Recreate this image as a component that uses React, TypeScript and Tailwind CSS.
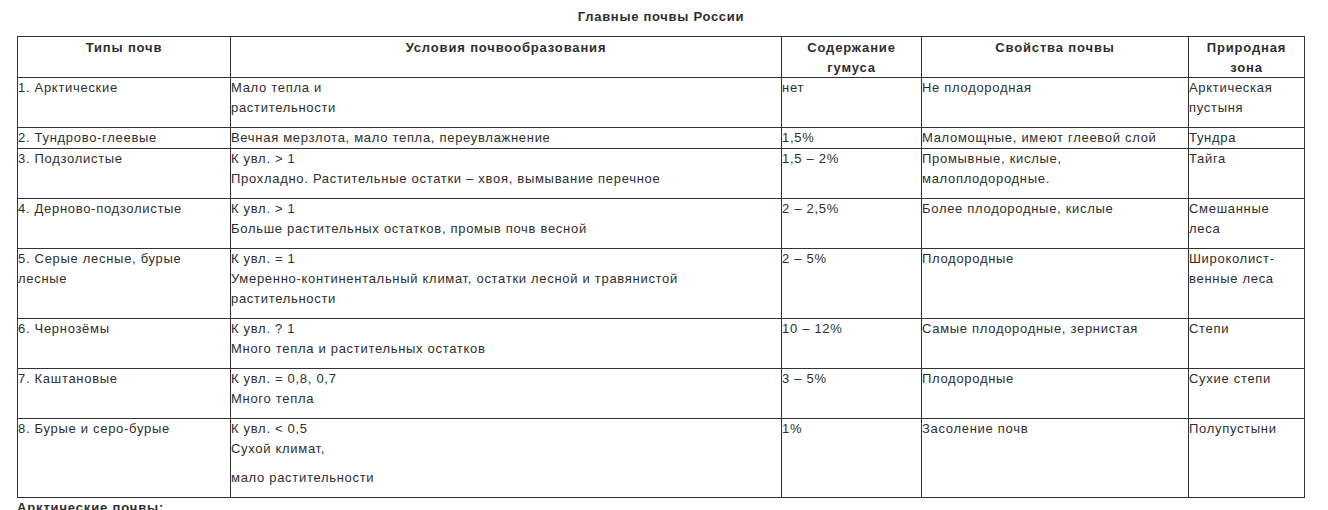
import React from "react";

const rows: { cells: string[][][]; pad: boolean }[] = [
  {
    pad: true,
    cells: [
      [["1. Арктические"]],
      [["Мало тепла и", "растительности"]],
      [["нет"]],
      [["Не плодородная"]],
      [["Арктическая", "пустыня"]],
    ],
  },
  {
    pad: false,
    cells: [
      [["2. Тундрово-глеевые"]],
      [["Вечная мерзлота, мало тепла, переувлажнение"]],
      [["1,5%"]],
      [["Маломощные, имеют глеевой слой"]],
      [["Тундра"]],
    ],
  },
  {
    pad: true,
    cells: [
      [["3. Подзолистые"]],
      [["К увл. > 1", "Прохладно. Растительные остатки – хвоя, вымывание перечное"]],
      [["1,5 – 2%"]],
      [["Промывные, кислые,", "малоплодородные."]],
      [["Тайга"]],
    ],
  },
  {
    pad: true,
    cells: [
      [["4. Дерново-подзолистые"]],
      [["К увл. > 1", "Больше растительных остатков, промыв почв весной"]],
      [["2 – 2,5%"]],
      [["Более плодородные, кислые"]],
      [["Смешанные", "леса"]],
    ],
  },
  {
    pad: true,
    cells: [
      [["5. Серые лесные, бурые", "лесные"]],
      [["К увл. = 1", "Умеренно-континентальный климат, остатки лесной и травянистой", "растительности"]],
      [["2 – 5%"]],
      [["Плодородные"]],
      [["Широколист-", "венные леса"]],
    ],
  },
  {
    pad: true,
    cells: [
      [["6. Чернозёмы"]],
      [["К увл. ? 1", "Много тепла и растительных остатков"]],
      [["10 – 12%"]],
      [["Самые плодородные, зернистая"]],
      [["Степи"]],
    ],
  },
  {
    pad: true,
    cells: [
      [["7. Каштановые"]],
      [["К увл. = 0,8, 0,7", "Много тепла"]],
      [["3 – 5%"]],
      [["Плодородные"]],
      [["Сухие степи"]],
    ],
  },
  {
    pad: true,
    cells: [
      [["8. Бурые и серо-бурые"]],
      [["К увл. < 0,5", "Сухой климат,"], ["мало растительности"]],
      [["1%"]],
      [["Засоление почв"]],
      [["Полупустыни"]],
    ],
  },
];

const headers: string[][] = [
  ["Типы почв"],
  ["Условия почвообразования"],
  ["Содержание", "гумуса"],
  ["Свойства почвы"],
  ["Природная", "зона"],
];

export default function App() {
  return (
    <div
      className="bg-white text-[#2e2e2e] text-[13px] leading-[20px] tracking-[0.7px] min-h-[510px] overflow-hidden"
      style={{ fontFamily: '"Liberation Sans", Arial, sans-serif' }}
    >
      <div className="ml-[17px] w-[1288px]">
        <div className="pt-[7px] mb-[9px] text-center font-bold">Главные почвы России</div>
        <div className="grid grid-cols-[213px_551px_140px_267px_116px] border-l border-t border-[#333333]">
          {headers.map((h, i) => (
            <div key={"h" + i} className="border-r border-b border-[#333333] text-center font-bold tracking-[0.85px] pt-px">
              {h.map((l, j) => (
                <div key={j} className={"whitespace-nowrap " + (j === 1 ? "leading-[19px]" : "")}>{l}</div>
              ))}
            </div>
          ))}
          {rows.map((r, ri) =>
            r.cells.map((c, ci) => (
              <div
                key={ri + "-" + ci}
                className={
                  "border-r border-b border-[#333333] " + (r.pad ? "pb-[9px]" : "")
                }
              >
                {c.map((para, pi) => (
                  <div key={pi} className={pi > 0 ? "mt-[9px]" : ""}>
                    {para.map((l, li) => (
                      <div key={li} className="whitespace-nowrap">
                        {l}
                      </div>
                    ))}
                  </div>
                ))}
              </div>
            ))
          )}
        </div>
        <div className="font-bold tracking-[0.85px]">Арктические почвы:</div>
      </div>
    </div>
  );
}
